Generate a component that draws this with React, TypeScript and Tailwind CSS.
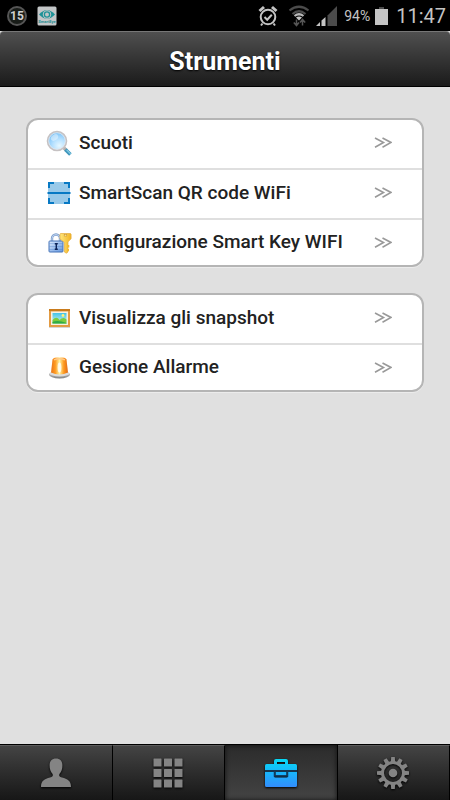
import { useState } from "react";
import type { ReactNode } from "react";

function MagnifierIcon() {
  return (
    <svg viewBox="0 0 28 28" className="size-7" aria-hidden="true">
      <defs>
        <radialGradient id="lens" cx="0.62" cy="0.75" r="0.8">
          <stop offset="0" stopColor="#e6f7ff" />
          <stop offset="0.45" stopColor="#b4e0ff" />
          <stop offset="1" stopColor="#6dbbf5" />
        </radialGradient>
      </defs>
      <path d="M18 18l3.5 3.5" stroke="#b5b1b0" strokeWidth="3.4" />
      <path d="M20.4 20.6l5 5" stroke="#3f97bd" strokeWidth="3.6" />
      <path d="M21.6 20.8l4 4" stroke="#86cde6" strokeWidth="1.1" />
      <circle cx="12" cy="12" r="9.4" fill="url(#lens)" stroke="#c6c2c3" strokeWidth="1.8" />
      <circle cx="12" cy="12" r="8.3" fill="none" stroke="#e4eaf0" strokeWidth="0.8" />
      <ellipse cx="9.5" cy="8.5" rx="4" ry="2.8" fill="#fff" opacity="0.4" transform="rotate(-35 9.5 8.5)" />
    </svg>
  );
}

function ScanIcon() {
  return (
    <svg viewBox="0 0 28 28" className="size-7" aria-hidden="true">
      <rect x="3" y="3" width="22" height="22" fill="#98c9e9" />
      <path
        d="M3 9V3h6v2H5v4zM19 3h6v6h-2V5h-4zM3 19v6h6v-2H5v-4zM25 19v6h-6v-2h4v-4z"
        fill="#0779c4"
      />
      <rect x="2.5" y="13" width="23" height="2" fill="#0779c4" />
    </svg>
  );
}

function LockKeyIcon() {
  return (
    <svg viewBox="0 0 28 28" className="size-7" aria-hidden="true">
      <defs>
        <linearGradient id="lock" x1="0" y1="0" x2="1" y2="1">
          <stop offset="0" stopColor="#dcebff" />
          <stop offset="1" stopColor="#6295dd" />
        </linearGradient>
        <linearGradient id="key" x1="0" y1="0" x2="1" y2="0">
          <stop offset="0" stopColor="#ffe67a" />
          <stop offset="1" stopColor="#f2b424" />
        </linearGradient>
      </defs>
      <path d="M7 13V9.500a4 4 0 0 1 8 0V13" fill="none" stroke="#7d9cc9" strokeWidth="2.400" />
      <path d="M7 13V9.500a4 4 0 0 1 8 0V13" fill="none" stroke="#bcd3f1" strokeWidth="1" />
      <rect x="4" y="12" width="14" height="11" rx="0.8" fill="url(#lock)" stroke="#4573b8" />
      <path d="M4.500 14.500h13M4.500 17.500h13M4.500 20.500h13" stroke="#3b70bd" strokeWidth="0.6" opacity="0.5" />
      <path d="M9.800 14h3v1.500h-.8v4h.8V21h-3v-1.500h.8v-4h-.8z" fill="#0c2459" />
      <path
        d="M15.500 4.500h10l.6.8v4.500l-3.100 3V23l-1.700 1.200-1.900-1.200v-9.700L15 10V5.300z"
        fill="url(#key)"
        stroke="#e4aa3c"
        strokeWidth="0.7"
      />
      <path d="M22.500 16h1.800v2.400h-1.800zM22.500 20h1.500v2h-1.500z" fill="#f4bb2c" />
      <rect x="19.200" y="5.500" width="2.600" height="1.500" fill="#fff3c7" stroke="#c48d20" strokeWidth="0.5" />
    </svg>
  );
}

function PictureIcon() {
  return (
    <svg viewBox="0 0 28 28" className="size-7" aria-hidden="true">
      <defs>
        <linearGradient id="sky" x1="0" y1="0" x2="0" y2="1">
          <stop offset="0" stopColor="#43c3e8" />
          <stop offset="1" stopColor="#d4f4ee" />
        </linearGradient>
      </defs>
      <rect x="4" y="22" width="21" height="2" fill="#d6d6d6" />
      <rect x="4" y="5" width="21" height="18" fill="#e39b43" />
      <rect x="4" y="5" width="21" height="2" fill="#c97b1c" />
      <rect x="6" y="7.500" width="17" height="13.500" fill="#f7f0e3" />
      <rect x="7.500" y="9" width="14" height="10.500" fill="url(#sky)" />
      <circle cx="18" cy="11.500" r="1.400" fill="#fff27b" />
      <path d="M7.500 16q4-4.500 7 0l2-1.500q3-1.500 5 1v4h-14z" fill="#7ccb3d" />
      <path d="M7.500 18q5-2.500 14 1v.5h-14z" fill="#2dac48" />
    </svg>
  );
}

function SirenIcon() {
  return (
    <svg viewBox="0 0 28 28" className="size-7" aria-hidden="true">
      <defs>
        <linearGradient id="lamp" x1="0" y1="0" x2="1" y2="0">
          <stop offset="0" stopColor="#e8751a" />
          <stop offset="0.25" stopColor="#ff9a20" />
          <stop offset="0.5" stopColor="#fff2a0" />
          <stop offset="0.75" stopColor="#ff9a20" />
          <stop offset="1" stopColor="#e06a16" />
        </linearGradient>
        <linearGradient id="base" x1="0" y1="0" x2="0" y2="1">
          <stop offset="0" stopColor="#e5e5e5" />
          <stop offset="1" stopColor="#808080" />
        </linearGradient>
      </defs>
      <ellipse cx="14.500" cy="20.500" rx="10.500" ry="4" fill="url(#base)" />
      <ellipse cx="14.500" cy="19.500" rx="9.800" ry="3" fill="#dcdcdc" />
      <path d="M7.500 5.500Q8.500 3.300 14.500 3.300T21.500 5.500L23 18.500q-8.500 4.200-17 0z" fill="url(#lamp)" />
      <path d="M9 5.800q5.500-2 11 0" fill="none" stroke="#ffc98a" strokeWidth="1.400" />
      <ellipse cx="14.500" cy="13.500" rx="1.900" ry="5" fill="#fff" opacity="0.8" />
    </svg>
  );
}

function Chevrons() {
  return (
    <svg
      viewBox="0 0 18 12"
      className="h-3 w-[18px]"
      fill="none"
      stroke="#999"
      strokeWidth="1.600"
      aria-hidden="true"
    >
      <path d="M1 1l8.500 4.500L1 10.200M8.500 1L17 5.500l-8.500 4.700" />
    </svg>
  );
}

function PersonIcon() {
  return (
    <svg viewBox="0 0 32 32" className="size-8 drop-shadow-[0_1px_1px_#000]" fill="#848484" aria-hidden="true">
      <path d="M16 1.500c4 0 6.400 2.700 6.400 6.800 0 3.700-1 6.600-3 8.600-.8 1.600.2 2.900 2.600 3.600 5.500 1.500 9 3.200 9 9.500H1c0-6.300 3.500-8 9-9.500 2.400-.7 3.400-2 2.600-3.600-2-2-3-4.900-3-8.600 0-4.100 2.400-6.800 6.400-6.800z" />
    </svg>
  );
}

function GridIcon() {
  return (
    <svg viewBox="0 0 32 32" className="size-8 drop-shadow-[0_1px_1px_#000]" fill="#848484" aria-hidden="true">
      {[1.5, 12, 22.5].map((y) =>
        [1.5, 12, 22.5].map((x) => <rect key={`${x}-${y}`} x={x} y={y} width="8" height="8" rx="0.5" />),
      )}
    </svg>
  );
}

function ToolboxIcon() {
  return (
    <svg viewBox="0 0 34 32" className="h-8 w-[34px] drop-shadow-[0_1px_1px_#000]" aria-hidden="true">
      <defs>
        <linearGradient id="toolbox" gradientUnits="userSpaceOnUse" x1="0" y1="1" x2="0" y2="30">
          <stop offset="0" stopColor="#05dcf5" />
          <stop offset="0.5" stopColor="#18b5fb" />
          <stop offset="1" stopColor="#338dfc" />
        </linearGradient>
      </defs>
      <g fill="url(#toolbox)">
        <path d="M10 8V4q0-2 2-2h10q2 0 2 2v4h-3V5h-8v3z" />
        <path d="M1 13V8.500Q1 7 2.500 7h29Q33 7 33 8.500V13z" />
        <path d="M1 15h9v4q0 1.500 1.500 1.500h11q1.500 0 1.500-1.500v-4h9v13.500q0 1.500-1.500 1.500h-29Q1 30 1 28.500z" />
        <path d="M11.500 15h11v3.500h-11z" />
      </g>
      <rect x="1" y="13" width="32" height="2" fill="#16354f" />
      <path d="M10.500 14v5h13v-5" fill="none" stroke="#123b5d" strokeWidth="1.500" />
    </svg>
  );
}

function GearIcon() {
  return (
    <svg viewBox="0 0 34 34" className="size-[34px] drop-shadow-[0_1px_1px_#000]" aria-hidden="true">
      <g fill="#848484">
        {[0, 30, 60, 90, 120, 150, 180, 210, 240, 270, 300, 330].map((angle) => (
          <path key={angle} d="M15.200 1h3.600l.4 5h-4.400z" transform={`rotate(${angle} 17 17)`} />
        ))}
      </g>
      <circle cx="17" cy="17" r="10.500" fill="none" stroke="#848484" strokeWidth="3" />
      <circle cx="17" cy="17" r="4.300" fill="#848484" />
    </svg>
  );
}

function StatusBar() {
  return (
    <div className="flex h-[31px] items-center justify-between bg-black pr-1 pl-[7px] text-[#c4c4c4]">
      <div className="flex items-center gap-2.5">
        <span className="flex size-5 items-center justify-center rounded-full border-2 border-[#555] bg-[#181c18] text-xs font-bold text-[#d0d0d0]">
          15
        </span>
        <svg viewBox="0 0 20 20" className="size-5" role="img" aria-label="SmartEye">
          <rect x="0.5" y="0.5" width="19" height="19" rx="1.5" fill="#c3c6c7" />
          <path d="M2 8.500Q10-.5 18 8.500 10 17 2 8.500z" fill="#1c9297" />
          <circle cx="10" cy="8.500" r="4.200" fill="#c3c6c7" />
          <circle cx="10" cy="8.500" r="2.600" fill="none" stroke="#1c9297" strokeWidth="1.300" />
          <text x="10" y="16.800" fontSize="4" fontWeight="700" textAnchor="middle" fill="#1c8a90">
            SmartEye
          </text>
        </svg>
      </div>
      <div className="flex items-center">
        <svg viewBox="0 0 20 22" className="mr-2.5 h-[22px] w-5" fill="none" stroke="#c4c4c4" strokeWidth="2" aria-hidden="true">
          <circle cx="10" cy="12" r="7.300" />
          <path d="M6.500 12l2.700 2.700 4.600-5M4.500 18.500L3 20.500M15.500 18.500l1.500 2" />
          <path d="M1.500 6L6 2M18.500 6L14 2" strokeWidth="3" />
        </svg>
        <svg viewBox="0 0 22 22" className="mr-1.5 size-[22px]" fill="none" strokeWidth="2.200" aria-hidden="true">
          <path d="M1.500 5.500Q11-2 20.500 5.500M4.500 9Q11 3.500 17.500 9" stroke="#4b4b4b" />
          <path d="M6.500 11q4.500-3.500 9 0" stroke="#b8b8b8" />
          <path d="M8 12.500q3-2 6 0l-3 3z" fill="#c4c4c4" />
          <path d="M8.500 14.500v5.500M5.800 17.500l2.700 3 2.500-3M14.500 20.500V15M12 17.500l2.500-3 2.700 3" stroke="#555" strokeWidth="1.500" />
        </svg>
        <svg viewBox="0 0 21 20" className="mr-[7px] h-5 w-[21px]" aria-hidden="true">
          <path d="M0 20l4-4v4zM5.500 20v-5.500L9.500 11v9z" fill="#c4c4c4" />
          <path d="M11.500 20V9.500L21 0v20z" fill="#4b4b4b" />
        </svg>
        <span className="mr-[5px] text-sm">94%</span>
        <svg viewBox="0 0 13 18" className="mr-2 h-[18px] w-[13px]" aria-hidden="true">
          <rect x="4" width="5" height="2" fill="#4b4b4b" />
          <rect y="2" width="13" height="16" fill="#c4c4c4" />
        </svg>
        <span className="text-xl">11:47</span>
      </div>
    </div>
  );
}

type Tool = { label: string; icon: ReactNode };

const groups: Tool[][] = [
  [
    { label: "Scuoti", icon: <MagnifierIcon /> },
    { label: "SmartScan QR code WiFi", icon: <ScanIcon /> },
    { label: "Configurazione Smart Key WIFI", icon: <LockKeyIcon /> },
  ],
  [
    { label: "Visualizza gli snapshot", icon: <PictureIcon /> },
    { label: "Gesione Allarme", icon: <SirenIcon /> },
  ],
];

const tabs: Tool[] = [
  { label: "Profilo", icon: <PersonIcon /> },
  { label: "Griglia", icon: <GridIcon /> },
  { label: "Strumenti", icon: <ToolboxIcon /> },
  { label: "Impostazioni", icon: <GearIcon /> },
];

function ToolGroup({ tools }: { tools: Tool[] }) {
  return (
    <ul className="rounded-xl border-2 border-[#b5b5b5] bg-white shadow-[0_1px_0_#ececec]">
      {tools.map((tool) => (
        <li key={tool.label} className="group border-b-2 border-[#dfdfdf] pb-0.5 last:border-0 last:pb-0">
          <button
            type="button"
            className="flex h-[46px] w-full items-center pr-[30px] pl-[17px] text-left group-last:h-[45px]"
          >
            {tool.icon}
            <span className="ml-1.5 flex-1 text-[19px] font-medium text-[#222]">{tool.label}</span>
            <Chevrons />
          </button>
        </li>
      ))}
    </ul>
  );
}

export default function App() {
  const [active, setActive] = useState("Strumenti");
  return (
    <div className="flex min-h-screen flex-col bg-[#e0e0e0] font-[Roboto,sans-serif]">
      <StatusBar />
      <header className="flex h-14 items-center justify-center rounded-t border-t border-b border-t-[#777] border-b-black bg-linear-to-b from-[#505050] to-[#1b1b1b] pt-1.5">
        <h1 className="text-[25px] font-bold text-white [text-shadow:0_1px_2px_#000]">Strumenti</h1>
      </header>
      <main className="flex flex-1 flex-col gap-[26px] px-[26px] pt-[31px]">
        {groups.map((tools) => (
          <ToolGroup key={tools[0].label} tools={tools} />
        ))}
      </main>
      <nav className="flex h-14 border-t border-black bg-black">
        {tabs.map((tab) => (
          <button
            key={tab.label}
            type="button"
            aria-label={tab.label}
            aria-pressed={active === tab.label}
            onClick={() => setActive(tab.label)}
            className={
              active === tab.label
                ? "flex flex-1 items-center justify-center border-r border-black bg-linear-to-b from-[#2b2b2b] to-[#444] shadow-[inset_0_0_5px_#111]"
                : "flex flex-1 items-center justify-center border-t border-r border-t-[#5c5c5c] border-r-black bg-linear-to-b from-[#444] to-[#171717]"
            }
          >
            {tab.icon}
          </button>
        ))}
      </nav>
    </div>
  );
}
